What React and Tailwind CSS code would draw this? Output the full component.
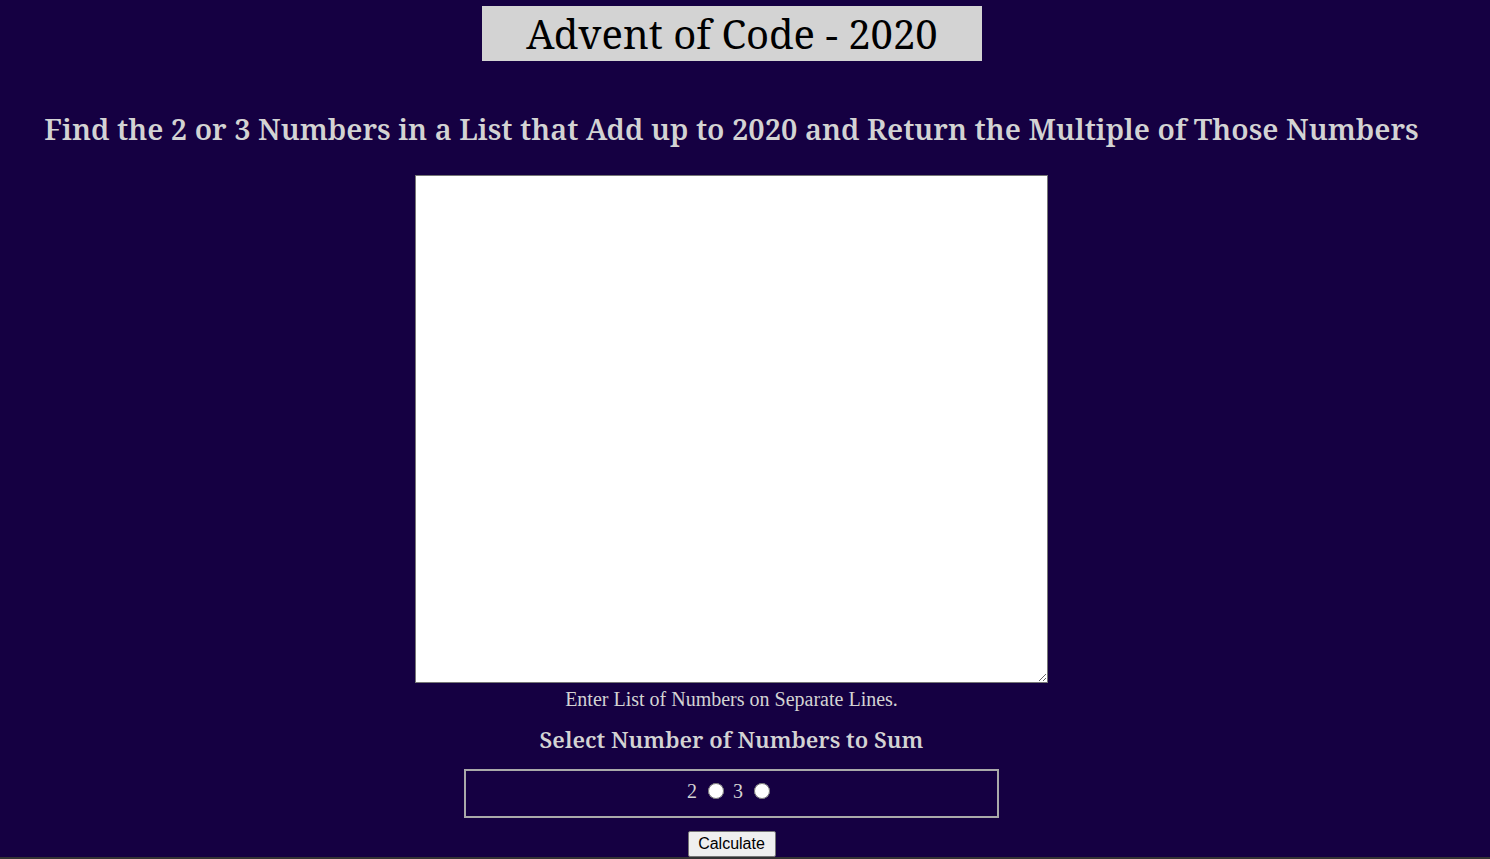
export default function App() {
  return (
    <div className="min-h-[859px] bg-[#333333]">
      <div className="h-[857px] bg-[#150042]">
        <div
          className="w-[1463px] flex flex-col items-center text-[#d3d3d3]"
          style={{ fontFamily: '"Noto Serif", "DejaVu Serif", serif' }}
        >
          {/* Title */}
          <h1 className="mt-[6px] ml-[1px] w-[500px] h-[55px] bg-[#d3d3d3] text-black text-[40px] leading-[55px] text-center font-normal">
            Advent of Code - 2020
          </h1>

          <h2 className="mt-[48px] text-[29px] leading-[40px] font-semibold text-center whitespace-nowrap">
            Find the 2 or 3 Numbers in a List that Add up to 2020 and Return the Multiple of Those Numbers
          </h2>

          <textarea className="mt-[26px] w-[633px] h-[508px] bg-white border border-[#767676] resize-y" />

          <p
            className="mt-[3px] text-[20px] leading-[26px]"
            style={{ fontFamily: '"Liberation Serif", serif' }}
          >
            Enter List of Numbers on Separate Lines.
          </p>

          <h3 className="mt-[13px] text-[22.5px] leading-[30px] font-semibold">Select Number of Numbers to Sum</h3>

          <div className="mt-[14px] w-[535px] h-[49px] pb-[5px] border-2 border-[#a9a9a9] flex items-center justify-center">
            <div
              className="flex items-center text-[20px] leading-[24px] -ml-[6px]"
              style={{ fontFamily: '"Liberation Serif", serif' }}
            >
              <span>2</span>
              <input type="radio" name="n" className="w-[16px] h-[16px] ml-[11px] mr-[9px]" />
              <span>3</span>
              <input type="radio" name="n" className="w-[16px] h-[16px] ml-[11px]" />
            </div>
          </div>

          <button
            className="mt-[13px] w-[88px] h-[26px] bg-[#efefef] text-black text-[16px] border border-[#767676] rounded-[2px]"
            style={{ fontFamily: '"Liberation Sans", Arial, sans-serif' }}
          >
            Calculate
          </button>
        </div>
      </div>
    </div>
  );
}
